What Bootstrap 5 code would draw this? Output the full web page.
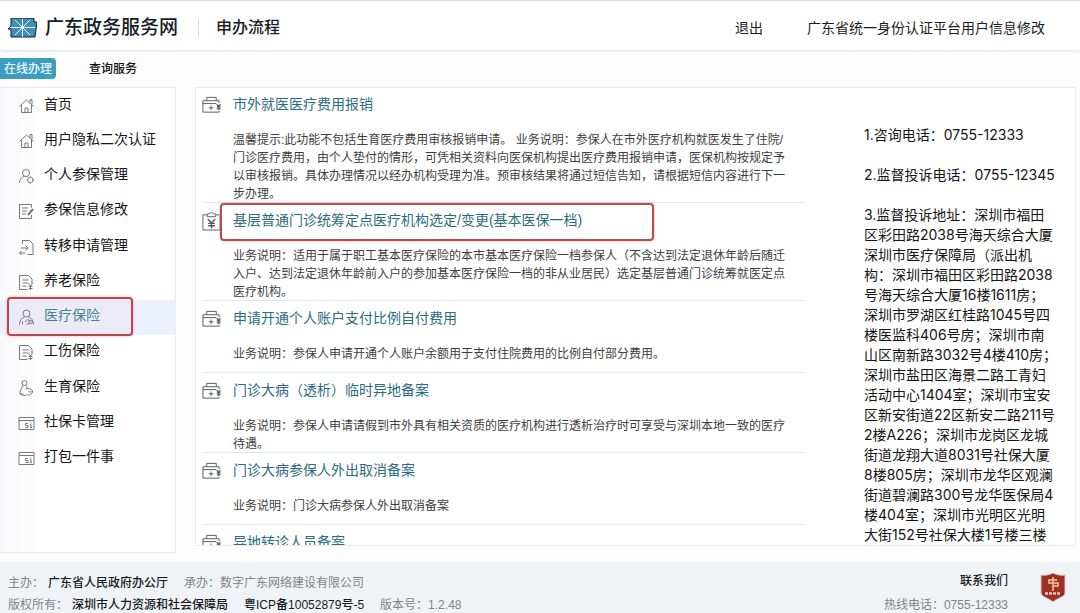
<!DOCTYPE html>
<html lang="zh-CN">
<head>
<meta charset="utf-8">
<meta name="viewport" content="width=device-width, initial-scale=1">
<title>广东政务服务网</title>
<link href="https://cdn.jsdelivr.net/npm/bootstrap@5.3.0/dist/css/bootstrap.min.css" rel="stylesheet">
<style>
body { font: 14px/20px "Liberation Sans", "Noto Sans CJK SC", sans-serif; color: #1c1c1c; background: #fdfdfe; }
a { text-decoration: none; color: inherit; }
svg { fill: none; stroke: currentColor; flex: none; }
.topbar { height: 50px; border-top: 1px solid #dcdcdd; box-shadow: 0 1px 3px #d9dde0; padding: 5px 35px 0 8px; background: #fff; z-index: 1; }
.brand-name { font-size: 19px; font-weight: 500; color: #161c22; margin-left: 8px; }
.page-name { font-size: 16px; font-weight: 500; color: #1c2024; border-left: 1px solid #dcdfe2; margin-left: 20px; padding-left: 17px; line-height: 16px; }
.account { gap: 44px; }
.tabs { height: 37px; font-size: 12px; padding-top: 8px; gap: 29px; }
.tab-item { border: 0; background: none; font-weight: 500; line-height: 20px; height: 21px; padding: 0 4px; color: #111; }
.tab-item.on { background: #3b9dc0; color: #e9fbff; border-radius: 0 4px 4px 0; }
.side { width: 176px; border: 1px solid #ececf0; border-left: 0; background: linear-gradient(90deg, #f7f7f9, #fff 40px); margin-bottom: 9px; }
.side ul { height: 388px; }
.side li { flex: 1 1 0; padding: 0 0 4px 18px; }
.side a { color: #161616; gap: 9px; }
.side svg { color: #77787c; margin-top: 4px; }
.side li.on { background: #ecf0fd; }
.side li.on a { color: #3c8592; }
.mark-box { position: absolute; border: 2px solid #b9484e; border-radius: 4px; box-shadow: 0 0 3px #f4a6a8; pointer-events: none; }
.mark-side { inset: -3px 42px -1px 7px; background: #ff88880c; }
.mark-item { left: 18px; top: 0; width: 434px; height: 38px; border-color: #b3504c; }
.panel { border: 1px solid #ececef; margin: 0 4px 16px 19px; padding-left: 6px; background: #fff; }
.services { flex: 0 1 603px; }
.service { min-height: 72px; border-top: 1px solid #e2e6e8; }
.service:first-child { border-color: transparent; margin-top: -2px; }
.service h2 { font-size: 14px; font-weight: 400; line-height: 20px; margin: 0; padding: 7px 0 17px; height: 44px; }
.service h2 a { color: #2b6c80; }
.service h2 svg { width: 19px; margin: 2px 12px 0 0; color: #555a60; }
.service p { font-size: 12px; line-height: 18px; margin: 0 0 -1px 31px; color: #3e3e40; }
.contact { font-family: Inter, "Noto Sans CJK SC", sans-serif; margin: 37px 12px 0 59px; color: #151515; flex: 1; }
.contact p { margin-bottom: 20px; white-space: nowrap; }
.site-foot { height: 51px; background: #f0f3f5; font-size: 12px; line-height: 22px; padding: 10px 14px 0 8px; color: #808488; }
.site-foot a { color: #161a1e; font-weight: 500; }
.hotline { line-height: 24px; margin: -3px 32px 0 0; }
</style>
</head>
<body class="d-flex flex-column vh-100 overflow-hidden">
<svg class="d-none">
  <symbol id="home" viewBox="0 0 16 16"><path d="M1 8.500 8 2l7 6.500M3 7v7.500h10V7M6.500 14.500V10h3v4.500M11.500 4.500v-3h2v5"/></symbol>
  <symbol id="person" viewBox="0 0 16 16"><circle cx="7.500" cy="5" r="3.500"/><path d="M1 15c0-4 2-6 5-6.500M9 9l-1-.5"/><circle cx="11.800" cy="12" r="2.700"/><path d="M11.800 8.300v1M11.800 14.700v1M8.200 12h1M14.500 12h1"/></symbol>
  <symbol id="edit" viewBox="0 0 16 16"><path d="M13 12v3.500H1V1.500h12v3M3.500 5h6M3.500 8h5M3.500 11h4"/><path stroke-width="2" d="m9.500 12 5-6"/></symbol>
  <symbol id="transfer" viewBox="0 0 16 16"><path d="M4 5V1.500h7l3.500 3.500v10.500H9M2 9h7M7 6.500 9.500 9 7 11.500M7 14H1M3 12l-2 2 2 2"/></symbol>
  <symbol id="policy" viewBox="0 0 16 16"><path d="M9 15.500H1V1.500h9l3.500 3.500v5M4 6h6M4 9h6M4 12h4M10 9.500l2 2.500 2-2.500M12 12v4M10 12.500h4M10 14.500h4"/></symbol>
  <symbol id="medical" viewBox="0 0 16 16"><circle cx="8" cy="4.500" r="3.500"/><path d="M1 15.500c0-4 2-6.500 5-7.500M10 8c3 1 5 3.500 5 7.500M4 15.500v-3M7 13c1-3 3-3 4-1l1 1M8 15h3"/><circle cx="12" cy="13" r="1.800"/></symbol>
  <symbol id="birth" viewBox="0 0 16 16"><circle cx="6" cy="3" r="2.500"/><path d="M4 5.500c0 3-3 5-2.500 7.500.5 2 3.500 2.500 6 2.500M7.500 5.500c.5 1.500 1 2.500 2 3M1 14h4"/><path d="M7 9.500c3-2 7.500-.5 7 2.500-.5 2-3 3.500-6 3M10 11l1.500 1.500L13 11"/></symbol>
  <symbol id="cardicon" viewBox="0 0 16 16"><path d="M.5 2.500h15v12H.5zM.5 5.500h15M9.500 8.500H7v2h2.500v2H7M12.500 7.500v1M11.500 9.500h1v3M11.500 12.500h2"/></symbol>
  <symbol id="kit" viewBox="0 0 20 18"><path d="M5 4.500V1h10v3.500M18 7V4.500H1v12h17V15M1 7.500h14M9.500 9.500v5M7 12h5"/><path stroke-width="1.300" d="m15.500 8 2 2.500 2-2.500M17.500 10.500V14M15.500 11h4M15.500 13h4"/></symbol>
  <symbol id="yuan" viewBox="0 0 20 20"><path d="M5 3.500H1v16h18v-16h-4M5.500 5.500v-3H8l2-2 2 2h2.500v3z"/><path stroke-width="1.500" d="m6 8 4 4 4-4M10 12v6M6.500 12.500h7M6.500 15h7"/></symbol>
</svg>

<header class="topbar d-flex align-items-center position-relative flex-shrink-0">
  <a href="#" class="d-flex align-items-center">
    <svg width="29" height="20" viewBox="0 0 29 20" stroke="none"><path fill="#3f8fb8" d="M3 0h23v4h3l-2 15H3v-8H0l3-3z"/><path stroke="#e5f6fc" d="M14.500 1v18M2 9.500h25M7 2l15 15M22 2 7 17"/></svg>
    <span class="brand-name">广东政务服务网</span>
  </a>
  <span class="page-name">申办流程</span>
  <div class="account d-flex ms-auto">
    <a href="#">退出</a>
    <a href="#">广东省统一身份认证平台用户信息修改</a>
  </div>
</header>

<nav class="tabs d-flex flex-shrink-0">
  <button type="button" class="tab-item on">在线办理</button>
  <button type="button" class="tab-item">查询服务</button>
</nav>

<div class="d-flex flex-grow-1 overflow-hidden">
  <nav class="side flex-shrink-0">
    <ul class="list-unstyled d-flex flex-column m-0">
      <li class="d-flex align-items-center"><a href="#" class="d-flex align-items-center"><svg width="17" height="16"><use href="#home"/></svg>首页</a></li>
      <li class="d-flex align-items-center"><a href="#" class="d-flex align-items-center"><svg width="17" height="16"><use href="#home"/></svg>用户隐私二次认证</a></li>
      <li class="d-flex align-items-center"><a href="#" class="d-flex align-items-center"><svg width="17" height="16"><use href="#person"/></svg>个人参保管理</a></li>
      <li class="d-flex align-items-center"><a href="#" class="d-flex align-items-center"><svg width="17" height="16"><use href="#edit"/></svg>参保信息修改</a></li>
      <li class="d-flex align-items-center"><a href="#" class="d-flex align-items-center"><svg width="17" height="16"><use href="#transfer"/></svg>转移申请管理</a></li>
      <li class="d-flex align-items-center"><a href="#" class="d-flex align-items-center"><svg width="17" height="16"><use href="#policy"/></svg>养老保险</a></li>
      <li class="d-flex align-items-center on position-relative"><a href="#" class="d-flex align-items-center"><svg width="17" height="16"><use href="#medical"/></svg>医疗保险</a><span class="mark-box mark-side"></span></li>
      <li class="d-flex align-items-center"><a href="#" class="d-flex align-items-center"><svg width="17" height="16"><use href="#policy"/></svg>工伤保险</a></li>
      <li class="d-flex align-items-center"><a href="#" class="d-flex align-items-center"><svg width="17" height="16"><use href="#birth"/></svg>生育保险</a></li>
      <li class="d-flex align-items-center"><a href="#" class="d-flex align-items-center"><svg width="17" height="16"><use href="#cardicon"/></svg>社保卡管理</a></li>
      <li class="d-flex align-items-center"><a href="#" class="d-flex align-items-center"><svg width="17" height="16"><use href="#cardicon"/></svg>打包一件事</a></li>
    </ul>
  </nav>

  <main class="panel d-flex flex-grow-1 overflow-hidden">
    <div class="services">
      <section class="service">
        <h2 class="d-flex align-items-center"><svg height="18"><use href="#kit"/></svg><a href="#">市外就医医疗费用报销</a></h2>
        <p>温馨提示:此功能不包括生育医疗费用审核报销申请。 业务说明：参保人在市外医疗机构就医发生了住院/<br>门诊医疗费用，由个人垫付的情形，可凭相关资料向医保机构提出医疗费用报销申请，医保机构按规定予<br>以审核报销。具体办理情况以经办机构受理为准。预审核结果将通过短信告知，请根据短信内容进行下一<br>步办理。</p>
      </section>
      <section class="service position-relative">
        <h2 class="d-flex align-items-center"><svg height="20"><use href="#yuan"/></svg><a href="#">基层普通门诊统筹定点医疗机构选定/变更(基本医保一档)</a></h2>
        <span class="mark-box mark-item"></span>
        <p>业务说明：适用于属于职工基本医疗保险的本市基本医疗保险一档参保人（不含达到法定退休年龄后随迁<br>入户、达到法定退休年龄前入户的参加基本医疗保险一档的非从业居民）选定基层普通门诊统筹就医定点<br>医疗机构。</p>
      </section>
      <section class="service">
        <h2 class="d-flex align-items-center"><svg height="18"><use href="#kit"/></svg><a href="#">申请开通个人账户支付比例自付费用</a></h2>
        <p>业务说明：参保人申请开通个人账户余额用于支付住院费用的比例自付部分费用。</p>
      </section>
      <section class="service">
        <h2 class="d-flex align-items-center"><svg height="18"><use href="#kit"/></svg><a href="#">门诊大病（透析）临时异地备案</a></h2>
        <p>业务说明：参保人申请请假到市外具有相关资质的医疗机构进行透析治疗时可享受与深圳本地一致的医疗<br>待遇。</p>
      </section>
      <section class="service">
        <h2 class="d-flex align-items-center"><svg height="18"><use href="#kit"/></svg><a href="#">门诊大病参保人外出取消备案</a></h2>
        <p>业务说明：门诊大病参保人外出取消备案</p>
      </section>
      <section class="service">
        <h2 class="d-flex align-items-center"><svg height="18"><use href="#kit"/></svg><a href="#">异地转诊人员备案</a></h2>
      </section>
    </div>
    <aside class="contact">
      <p>1.咨询电话：0755-12333</p>
      <p>2.监督投诉电话：0755-12345</p>
      <p>3.监督投诉地址：深圳市福田<br>区彩田路2038号海天综合大厦<br>深圳市医疗保障局（派出机<br>构：深圳市福田区彩田路2038<br>号海天综合大厦16楼1611房；<br>深圳市罗湖区红桂路1045号四<br>楼医监科406号房；深圳市南<br>山区南新路3032号4楼410房；<br>深圳市盐田区海景二路工青妇<br>活动中心1404室；深圳市宝安<br>区新安街道22区新安二路211号<br>2楼A226；深圳市龙岗区龙城<br>街道龙翔大道8031号社保大厦<br>8楼805房；深圳市龙华区观澜<br>街道碧澜路300号龙华医保局4<br>楼404室；深圳市光明区光明<br>大街152号社保大楼1号楼三楼</p>
    </aside>
  </main>
</div>

<footer class="site-foot d-flex flex-shrink-0">
  <div>
    <div class="d-flex gap-3"><span>主办：<a href="#" class="ms-1">广东省人民政府办公厅</a></span><span>承办：数字广东网络建设有限公司</span></div>
    <div class="d-flex gap-3"><span>版权所有：<a href="#" class="ms-1">深圳市人力资源和社会保障局</a></span><a href="#">粤ICP备10052879号-5</a><span>版本号：1.2.48</span></div>
  </div>
  <div class="hotline ms-auto text-end"><a href="#">联系我们</a><br>热线电话：0755-12333</div>
  <svg width="26" height="31" viewBox="0 0 26 31" stroke="none"><path fill="#9c2f25" stroke="#e0c9c4" d="M13 1c4 2 8 2.500 12 2v18c0 4-8 5-12 9-4-4-12-5-12-9V3c4 .5 8 0 12-2z"/><path stroke="#f3c9a0" stroke-width="1.500" d="M13 5v14M17 8H9v3h9v3h-5"/><path stroke="#f0c8b8" stroke-width="2.500" stroke-dasharray="3 1" d="M5 21.500h16"/></svg>
</footer>
<script src="https://cdn.jsdelivr.net/npm/bootstrap@5.3.0/dist/js/bootstrap.bundle.min.js"></script>
</body>
</html>
